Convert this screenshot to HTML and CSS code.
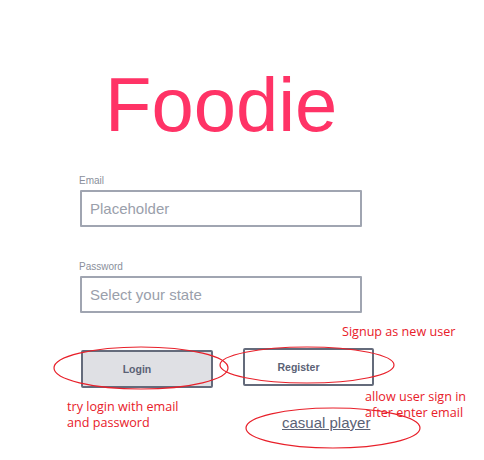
FILE: index.html
```html
<!DOCTYPE html>
<html>
<head>
<meta charset="utf-8">
<link rel="stylesheet" href="styles.css">
</head>
<body>
<div class="page">
  <h1 class="logo">Foodie</h1>
  <form class="form">
    <div class="field">
      <label class="label">Email</label>
      <div class="input"><span class="ph">Placeholder</span></div>
    </div>
    <div class="field field-pw">
      <label class="label">Password</label>
      <div class="input"><span class="ph">Select your state</span></div>
    </div>
    <div class="actions">
      <div class="btn btn-login">Login</div>
      <div class="btn btn-register">Register</div>
    </div>
    <div class="casual"><a class="casual-link">casual player</a></div>
  </form>

  <svg class="marks" width="484" height="460" viewBox="0 0 484 460">
    <ellipse cx="141" cy="368" rx="87" ry="21" />
    <ellipse cx="307" cy="365" rx="87" ry="18" />
    <ellipse cx="333" cy="428" rx="87" ry="20" />
  </svg>
  <div class="note note-signup">Signup as new user</div>
  <div class="note note-login">try login with email<br>and password</div>
  <div class="note note-casual">allow user sign in<br>after enter email</div>
</div>
</body>
</html>
```

FILE: styles.css
```css
html, body {
  margin: 0;
  padding: 0;
  background: #ffffff;
}
.page {
  position: relative;
  width: 484px;
  height: 460px;
  overflow: hidden;
  font-family: "Liberation Sans", Arial, sans-serif;
}
.logo {
  margin: 0;
  padding: 67px 0 0 105px;
  font-family: "Liberation Sans", Arial, sans-serif;
  font-weight: 400;
  font-size: 76px;
  line-height: 76px;
  color: #ff3366;
}
.form {
  display: flex;
  flex-direction: column;
  padding-left: 79px;
  margin-top: 32px;
}
.field {
  display: flex;
  flex-direction: column;
}
.field-pw {
  margin-top: 34px;
}
.label {
  font-size: 10px;
  line-height: 12px;
  color: #8a8f9b;
  height: 12px;
  margin-bottom: 3px;
}
.input {
  box-sizing: border-box;
  width: 282px;
  height: 37px;
  margin-left: 1px;
  border: 2px solid #a0a5b1;
  border-radius: 1px;
  display: flex;
  align-items: center;
  padding-left: 8px;
}
.ph {
  font-size: 15px;
  color: #9aa0ab;
}
.actions {
  display: flex;
  align-items: flex-start;
  gap: 30px;
  margin-top: 35px;
  margin-left: 2px;
}
.btn {
  box-sizing: border-box;
  height: 38px;
  border: 2px solid #646b7b;
  border-radius: 2px;
  display: flex;
  align-items: center;
  justify-content: center;
  padding-right: 20px;
  font-size: 10.5px;
  font-weight: 700;
  color: #5b6275;
}
.btn-login {
  width: 132px;
  background: #dfe0e4;
  margin-top: 2px;
}
.btn-register {
  width: 131px;
  background: #ffffff;
}
.casual {
  margin-top: 26px;
  padding-left: 203px;
}
.casual-link {
  font-size: 15px;
  line-height: 18px;
  color: #5b6275;
  text-decoration: underline;
  text-decoration-color: #5b6275;
}
.marks {
  position: absolute;
  left: 0;
  top: 0;
  fill: none;
  stroke: #e8202a;
  stroke-width: 1.2;
}
.note {
  position: absolute;
  font-family: "Open Sans", "Noto Sans", sans-serif;
  font-size: 12.6px;
  line-height: 16px;
  color: #e8202a;
  white-space: nowrap;
}
.note-signup {
  left: 342px;
  top: 324px;
}
.note-login {
  left: 67px;
  top: 399px;
}
.note-casual {
  left: 365px;
  top: 389px;
}
```
